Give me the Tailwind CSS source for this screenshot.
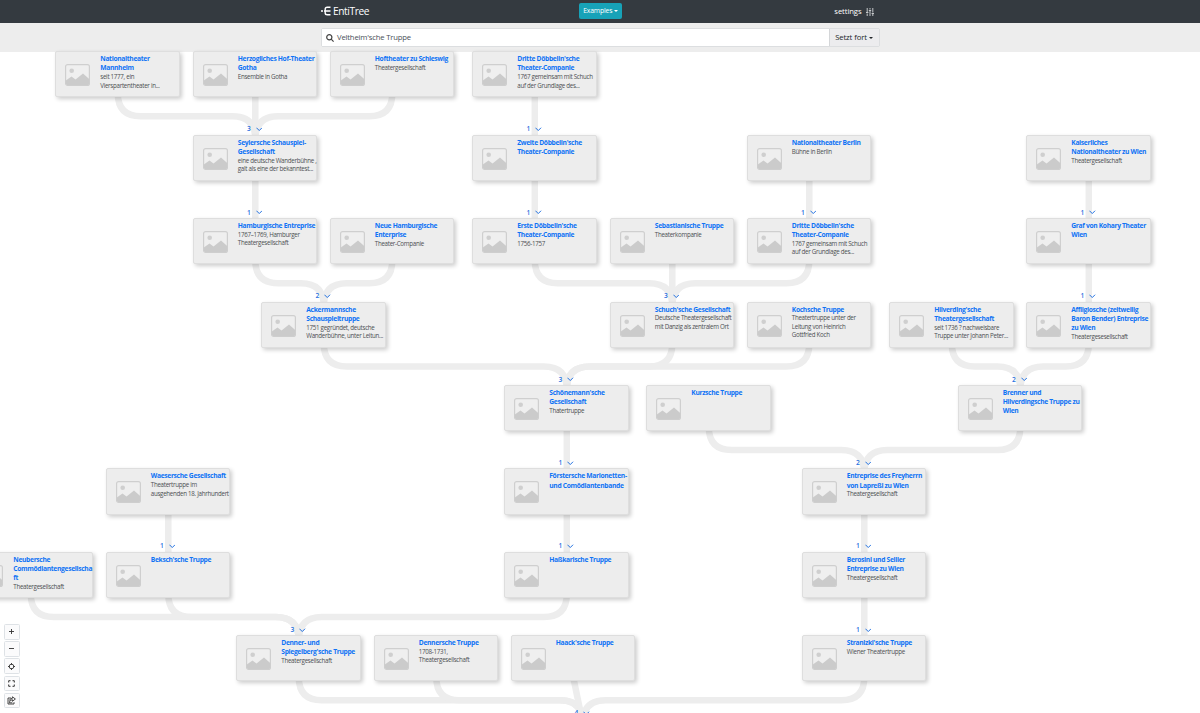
<!DOCTYPE html>
<html lang="de">
<head>
    <meta charset="UTF-8">
    <meta name="viewport" content="width=device-width, initial-scale=1.0">
    <script src="https://cdn.jsdelivr.net/npm/@tailwindcss/browser@4"></script>
    <title>EntiTree</title>
</head>

<body class="h-screen overflow-hidden bg-white font-['Open_Sans',sans-serif] text-[#212529] flex flex-col">

    <header class="h-[23px] shrink-0 bg-[#343a40] text-white">
        <div class="mx-auto w-[559px] h-full flex items-center justify-between">
            <a class="w-[230px] flex items-center text-[10.2px] tracking-[-0.4px] leading-none gap-[2.500px]">
                <svg class="w-[10px] h-[10px]" viewBox="0 0 10 10" fill="none" stroke="white" stroke-width="1.4">
                    <path d="M0 5h2M3 5h6.5M9.5 1.2H6.2Q4.2 1.2 4.2 3v4q0 1.800 2 1.800h3.300"/>
                </svg>
                EntiTree
            </a>
            <button class="h-4 w-[43px] ml-[1px] mb-px rounded-[2px] bg-[#17a2b8] text-[6.8px] tracking-[-0.15px] flex items-center justify-center gap-[1.500px]">
                Examples
                <svg class="w-[4px] h-[2px]" viewBox="0 0 4 2" fill="white"><path d="M0 0h4L2 2z"/></svg>
            </button>
            <a class="w-[230px] pr-[6px] flex items-center justify-end gap-[4px] text-[7.700px] tracking-[-0.1px] leading-none pt-px">
                settings
                <svg class="w-[8px] h-[8px]" viewBox="0 0 8 8" fill="none" stroke="#d5d7d9" stroke-width="0.9">
                    <path d="M1.200 0v4M1.200 5.500V8M4 0v1.500M4 3v5M6.800 0v4.500M6.800 6v2M0 4.500h2.400M2.800 2.500h2.400M5.600 5.500H8"/>
                </svg>
            </a>
        </div>
    </header>

    <div class="h-[28.500px] shrink-0 bg-[#ededed]">
        <div class="mx-auto mt-[4.500px] w-[559px] h-[19px] flex border border-[#dcdee0] rounded-[2px] text-[7.700px]">
            <div class="flex-1 bg-white flex items-center gap-[3.500px] pl-[4px] pt-px text-[#495057] tracking-[-0.18px]">
                <svg class="w-[8px] h-[8px]" viewBox="0 0 8 8" fill="none" stroke="#444" stroke-width="1.200">
                    <circle cx="3.300" cy="3.300" r="2.600"/><path d="M5.200 5.200L7.600 7.600"/>
                </svg>
                <span>Veltheim'sche Truppe</span>
            </div>
            <div class="w-[50px] pt-px border-l border-[#d4d6d8] bg-[#ececee] flex items-center justify-center gap-[2px] tracking-[-0.1px]">
                Setzt fort
                <svg class="w-[4px] h-[2px]" viewBox="0 0 4 2" fill="#212529"><path d="M0 0h4L2 2z"/></svg>
            </div>
        </div>
    </div>

    <!-- tree canvas, nodes and links are placed by the script below -->
    <main class="absolute inset-0 overflow-hidden">
        <svg id="links" class="absolute left-0 top-0 w-[1200px] h-[713px]" viewBox="0 0 1200 713" fill="none" stroke="#ededed" stroke-width="6.500"></svg>
        <div id="nodes"></div>
    </main>

    <div class="absolute left-[4px] top-[624px] flex flex-col gap-[1.700px]">
        <button class="size-[15.500px] border border-[#dee2e6] rounded-[1.500px] bg-[#fbfbfc] flex items-center justify-center">
            <svg class="size-[9px]" viewBox="0 0 9 9" fill="none" stroke="#333" stroke-width="0.9"><path d="M2 4.500h5M4.500 2v5"/></svg>
        </button>
        <button class="size-[15.500px] border border-[#dee2e6] rounded-[1.500px] bg-[#fbfbfc] flex items-center justify-center">
            <svg class="size-[9px]" viewBox="0 0 9 9" fill="none" stroke="#333" stroke-width="0.9"><path d="M2 4.500h5"/></svg>
        </button>
        <button class="size-[15.500px] border border-[#dee2e6] rounded-[1.500px] bg-[#fbfbfc] flex items-center justify-center">
            <svg class="size-[9px]" viewBox="0 0 9 9" fill="none" stroke="#333" stroke-width="0.9"><circle cx="4.500" cy="4.500" r="2.300"/><path d="M4.500 1v1.800M4.500 6.200V8M1 4.500h1.800M6.200 4.500H8"/></svg>
        </button>
        <button class="size-[15.500px] border border-[#dee2e6] rounded-[1.500px] bg-[#fbfbfc] flex items-center justify-center">
            <svg class="size-[9px]" viewBox="0 0 9 9" fill="none" stroke="#333" stroke-width="1"><path d="M1.700 3.500V1.700h1.800M5.500 1.700h1.800v1.800M7.300 5.500v1.800H5.500M3.500 7.300H1.700V5.500"/></svg>
        </button>
        <button class="size-[15.500px] border border-[#dee2e6] rounded-[1.500px] bg-[#fbfbfc] flex items-center justify-center">
            <svg class="size-[9px]" viewBox="0 0 9 9" fill="none" stroke="#333" stroke-width="0.9"><path d="M4 2H1v6h6V6.200M2.300 6.800Q2.300 3.700 5.400 3.700V5.300L8.400 3 5.400.8V2.300Q3 2.400 2.300 4.500M2.300 6.800h3"/></svg>
        </button>
    </div>

</body>
</html>

<script>

    const ROW = 83.43
    const TOP = 51.3

    // [row, left, title, description, number of children above]
    const nodes = [
        [0, 55.5, 'Nationaltheater|Mannheim', 'seit 1777, ein|Vierspartentheater in...'],
        [0, 193, 'Herzogliches Hof-Theater|Gotha', 'Ensemble in Gotha'],
        [0, 330, 'Hoftheater zu Schleswig', 'Theatergesellschaft'],
        [0, 472.5, "Dritte Döbbelin'sche|Theater-Companie", '1767 gemeinsam mit Schuch|auf der Grundlage des...'],
        [1, 193, 'Seylersche Schauspiel-|Gesellschaft', 'eine deutsche Wanderbühne ,|galt als eine der bekanntest...', 3],
        [1, 472.5, "Zweite Döbbelin'sche|Theater-Companie", '', 1],
        [1, 747, 'Nationaltheater Berlin', 'Bühne in Berlin'],
        [1, 1026.5, 'Kaiserliches|Nationaltheater zu Wien', 'Theatergesellschaft'],
        [2, 193, 'Hamburgische Entreprise', '1767–1769, Hamburger|Theatergesellschaft', 1],
        [2, 330, 'Neue Hamburgische|Enterprise', 'Theater-Companie'],
        [2, 472.5, "Erste Döbbelin'sche|Theater-Companie", '1756-1757', 1],
        [2, 610, 'Sebastianische Truppe', 'Theaterkompanie'],
        [2, 747, "Dritte Döbbelin'sche|Theater-Companie", '1767 gemeinsam mit Schuch|auf der Grundlage des...', 1],
        [2, 1026.5, 'Graf von Kohary Theater|Wien', '', 1],
        [3, 261.5, 'Ackermannsche|Schauspieltruppe', '1751 gegründet, deutsche|Wanderbühne, unter Leitun...', 2],
        [3, 610, "Schuch'sche Gesellschaft", 'Deutsche Theatergesellschaft|mit Danzig als zentralem Ort', 3],
        [3, 747, 'Kochsche Truppe', 'Theatertruppe unter der|Leitung von Heinrich|Gottfried Koch'],
        [3, 889.5, "Hilverding'sche|Theatergesellschaft", 'seit 1736 ? nachweisbare|Truppe unter Johann Peter...'],
        [3, 1026.5, 'Affligiosche (zeitweilig|Baron Bender) Entreprise|zu Wien', 'Theatergesesellschaft', 1],
        [4, 504.5, "Schönemann'sche|Gesellschaft", 'Thatertruppe', 3],
        [4, 646.5, 'Kurzsche Truppe', ''],
        [4, 958, 'Brenner und|Hilverdingsche Truppe zu|Wien', '', 2],
        [5, 106, 'Waesersche Gesellschaft', 'Theatertruppe im|ausgehenden 18. Jahrhundert'],
        [5, 504.5, 'Förstersche Marionetten-|und Comödiantenbande', '', 1],
        [5, 802, 'Entreprise des Freyherrn|von Lapreßi zu Wien', 'Theatergesellschaft', 2],
        [6, -31.5, 'Neubersche|Commödiantengesellscha|ft', 'Theatergesellschaft'],
        [6, 106, "Beksch'sche Truppe", '', 1],
        [6, 504.5, 'Haßkarische Truppe', '', 1],
        [6, 802, 'Berosini und Sellier|Entreprise zu Wien', 'Theatergesellschaft', 1],
        [7, 236.5, "Denner- und|Spiegelberg'sche Truppe", 'Theatergesellschaft', 3],
        [7, 374, 'Dennersche Truppe', '1708-1731,|Theatergesellschaft'],
        [7, 511, "Haack'sche Truppe", ''],
        [7, 802, "Stranizki'sche Truppe", 'Wiener Theatertruppe', 1],
        [8, 520.5, '', '', 4],
    ]

    // [row of the upper node, left of the upper node, left of the lower node]
    const links = [
        [0, 55.5, 193], [0, 193, 193], [0, 330, 193], [0, 472.5, 472.5],
        [1, 193, 193], [1, 472.5, 472.5], [1, 747, 747], [1, 1026.5, 1026.5],
        [2, 193, 261.5], [2, 330, 261.5], [2, 472.5, 610], [2, 610, 610], [2, 747, 610], [2, 1026.5, 1026.5],
        [3, 261.5, 504.5], [3, 610, 504.5], [3, 747, 504.5], [3, 889.5, 958], [3, 1026.5, 958],
        [4, 504.5, 504.5], [4, 646.5, 802], [4, 958, 802],
        [5, 106, 106], [5, 504.5, 504.5], [5, 802, 802],
        [6, -31.5, 236.5], [6, 106, 236.5], [6, 504.5, 236.5], [6, 802, 802],
        [7, 236.5, 520.5], [7, 374, 520.5], [7, 511, 520.5], [7, 802, 520.5],
    ]

    const br = (s) => s.split('|').join('<br>')

    document.querySelector('#nodes').innerHTML = nodes.map(([row, left, title, desc, count]) => {
        const top = TOP + row * ROW
        return (title ? `
        <div class="absolute w-[124.500px] h-[46.200px] flex rounded-[2px] border border-[#dedede] bg-[#ededed] shadow-[2px_2px_4px_rgba(0,0,0,0.2)]" style="left:${left - 0.3}px;top:${top}px">
            <svg class="w-[25px] h-[22px] ml-[9.200px] mt-[12px] shrink-0" viewBox="0 0 25 22">
                <rect x="0.6" y="0.6" width="23.800" height="20.800" rx="2" fill="#efefef" stroke="#cfcfcf" stroke-width="1.200"/>
                <circle cx="6.700" cy="6.700" r="2.300" fill="#cfcfcf"/>
                <path d="M.8 16.500L6.500 12.500l4 3L18 9.500l6.200 5.500V19.500q0 1.700-2 1.700H3q-2.200 0-2.200-1.700z" fill="#cbcbcb"/>
            </svg>
            <div class="pl-[9.900px] pt-[2px] whitespace-nowrap">
                <p class="text-[6.700px] leading-[9.100px] tracking-[-0.32px] font-bold text-[#0f73f5]">${br(title)}</p>
                <p class="text-[6.200px] leading-[8.300px] tracking-[-0.290px] mt-[0.800px] text-[#4c4f52]">${br(desc)}</p>
            </div>
        </div>` : '') + (count ? `
        <div class="absolute flex items-center gap-[5px] text-[6.600px] leading-[8px] font-semibold text-[#1f6fe0]" style="left:${left + 54}px;top:${top - 9.5}px">
            ${count}
            <svg class="w-[6.500px] h-[4.500px]" viewBox="0 0 6 4" fill="none" stroke="#1f6fe0" stroke-width="0.9"><path d="M.4.600L3 3.200 5.600.600"/></svg>
        </div>` : '')
    }).join('')

    document.querySelector('#links').innerHTML = links.map(([row, from, to]) => {
        const x1 = from + 62.3
        const x2 = to + 62.3
        const y1 = TOP + row * ROW + 23.3
        const y2 = y1 + ROW
        const mid = (y1 + y2) / 2
        const dx = x2 - x1
        const r = 23
        const s = Math.sign(dx) * r
        let d = `M${x1} ${y1}V${y2}`
        if (Math.abs(dx) > 2 * r) {
            d = `M${x1} ${y1}V${mid - r}Q${x1} ${mid} ${x1 + s} ${mid}H${x2 - s}Q${x2} ${mid} ${x2} ${mid + r}V${y2}`
        } else if (dx) {
            d = `M${x1} ${y1}V${mid - r}L${x2} ${mid + r}V${y2}`
        }
        return `<path d="${d}"/>`
    }).join('')

</script>
